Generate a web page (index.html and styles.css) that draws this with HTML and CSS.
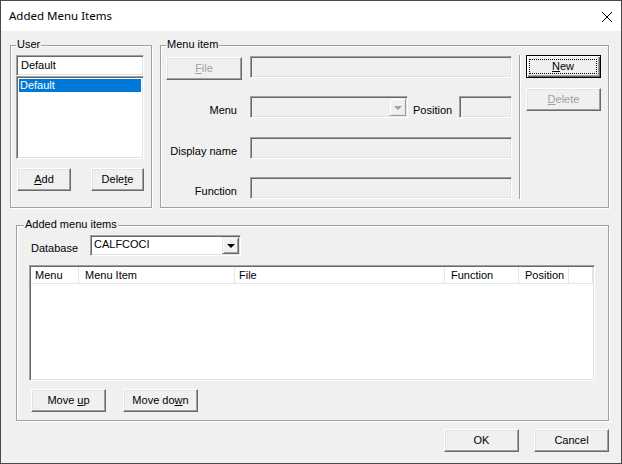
FILE: index.html
```html
<!DOCTYPE html>
<html>
<head>
<meta charset="utf-8">
<title>Added Menu Items</title>
<link rel="stylesheet" href="styles.css">
</head>
<body>
<div class="window">
  <div class="titlebar">
    <span class="title">Added Menu Items</span>
    <svg class="close" width="10" height="10" viewBox="0 0 10 10"><path d="M0 0L10 10M10 0L0 10" stroke="#000" stroke-width="1"/></svg>
  </div>
  <div class="content">
    <div class="top-row">
      <div class="group user-group">
        <span class="group-label">User</span>
        <div class="field user-field">Default</div>
        <div class="field listbox"><div class="list-item selected">Default</div></div>
        <div class="btn-row user-btns">
          <div class="btn btn-add"><span><u>A</u>dd</span></div>
          <div class="btn btn-udel"><span>Dele<u>t</u>e</span></div>
        </div>
      </div>
      <div class="group menu-group">
        <span class="group-label">Menu item</span>
        <div class="menu-form">
          <div class="form-row r1">
            <div class="btn disabled file-btn"><span><u>F</u>ile</span></div>
            <div class="field disabled wide"></div>
          </div>
          <div class="form-row r2">
            <span class="lbl">Menu</span>
            <div class="field disabled combo menu-combo"><span class="arrow off"><i class="tri"></i></span></div>
            <span class="lbl-inline">Position</span>
            <div class="field disabled pos"></div>
          </div>
          <div class="form-row r3">
            <span class="lbl">Display name</span>
            <div class="field disabled wide"></div>
          </div>
          <div class="form-row r4">
            <span class="lbl">Function</span>
            <div class="field disabled wide"></div>
          </div>
        </div>
        <div class="vsep"></div>
        <div class="side-btns">
          <div class="btn default"><span class="focus"><u>N</u>ew</span></div>
          <div class="btn disabled side-del"><span><u>D</u>elete</span></div>
        </div>
      </div>
    </div>
    <div class="group added-group">
      <span class="group-label">Added menu items</span>
      <div class="db-row">
        <span class="db-label">Database</span>
        <div class="field combo db-combo"><span class="combo-text">CALFCOCI</span><span class="arrow"><i class="tri"></i></span></div>
      </div>
      <div class="field listview">
        <div class="lv-header">
          <span class="col c-menu">Menu</span>
          <span class="col c-item">Menu Item</span>
          <span class="col c-file">File</span>
          <span class="col c-func">Function</span>
          <span class="col c-pos">Position</span>
        </div>
      </div>
      <div class="btn-row move-btns">
        <div class="btn move-up"><span>Move <u>u</u>p</span></div>
        <div class="btn move-down"><span>Move do<u>w</u>n</span></div>
      </div>
    </div>
    <div class="footer">
      <div class="btn ok"><span>OK</span></div>
      <div class="btn"><span>Cancel</span></div>
    </div>
  </div>
</div>
</body>
</html>
```
FILE: styles.css
```css
* { box-sizing: border-box; margin: 0; padding: 0; }
html, body { width: 622px; height: 464px; overflow: hidden; }
body {
  font-family: "Liberation Sans", Arial, sans-serif;
  font-size: 11px;
  color: #000;
  background: #f0f0f0;
}
.window {
  width: 622px;
  height: 464px;
  border: 1px solid #4a4a4a;
  display: flex;
  flex-direction: column;
  background: #f0f0f0;
}
.titlebar {
  height: 30px;
  flex: none;
  background: #fff;
  display: flex;
  align-items: center;
  justify-content: space-between;
  padding: 0 9px 0 8px;
}
.title {
  font-family: "Noto Sans", "Open Sans", sans-serif;
  font-size: 11.5px;
  line-height: 16px;
}
.close { display: block; margin-top: 1px; }

.content {
  flex: 1;
  padding: 14px 0 0 9px;
  display: flex;
  flex-direction: column;
}
.top-row { display: flex; align-items: flex-start; }

.group {
  position: relative;
  border: 1px solid #a0a0a0;
  box-shadow: inset 1px 1px #fff, 1px 1px #fff;
}
.group-label {
  position: absolute;
  top: -8px;
  left: 5px;
  padding: 0 1px;
  line-height: 13px;
  background: #f0f0f0;
}

/* sunken field */
.field {
  border: 1px solid;
  border-color: #a0a0a0 #fff #fff #a0a0a0;
  box-shadow: inset 1px 1px #696969, inset -1px -1px #e3e3e3;
  background: #fff;
}
.field.disabled { background: #f0f0f0; }

/* raised button */
.btn {
  height: 23px;
  display: flex;
  align-items: center;
  justify-content: center;
  background: #f0f0f0;
  border: 1px solid;
  border-color: #fff #696969 #696969 #fff;
  box-shadow: inset -1px -1px #a0a0a0, inset 1px 1px #e3e3e3;
  width: 75px;
  line-height: 13px;
}
.btn.disabled { color: #a0a0a0; }
.btn.default {
  border-color: #000;
  box-shadow: inset 1px 1px #fff, inset -1px -1px #696969, inset -2px -2px #a0a0a0;
  align-items: stretch;
}
.focus {
  flex: 1;
  margin: 3px 3px 3px 2px;
  border: 1px dotted #000;
  display: flex;
  align-items: center;
  justify-content: center;
}

/* User group */
.user-group {
  width: 142px;
  height: 163px;
  padding: 9px 0 0 5px;
}
.user-field {
  width: 128px;
  height: 21px;
  padding-left: 4px;
  line-height: 19px;
}
.listbox {
  width: 128px;
  height: 83px;
  padding: 2px;
}
.list-item {
  height: 13px;
  line-height: 13px;
  padding-left: 1px;
}
.list-item.selected { background: #0078d7; color: #fff; }
.btn-row { display: flex; }
.user-btns { margin-top: 9px; }
.btn-add { width: 54px; margin-left: 1px; }
.btn-udel { width: 53px; margin-left: 20px; }

/* Menu item group */
.menu-group {
  width: 449px;
  height: 163px;
  margin-left: 8px;
  padding: 10px 0 0 5px;
  display: flex;
  align-items: flex-start;
}
.menu-form { width: 346px; display: flex; flex-direction: column; }
.form-row { display: flex; align-items: flex-start; height: 22px; }
.r2 { margin-top: 18px; }
.r3 { margin-top: 19px; }
.r4 { margin-top: 18px; }
.file-btn { width: 76px; margin-top: 1px; }
.wide { width: 262px; height: 22px; margin-left: 8px; }
.lbl {
  width: 76px;
  text-align: right;
  padding-right: 5px;
  margin-top: 8px;
  line-height: 13px;
}
.combo { height: 22px; display: flex; justify-content: flex-end; padding: 1px; }
.menu-combo { width: 158px; margin-left: 8px; }
.lbl-inline { margin: 8px 0 0 5px; line-height: 13px; }
.pos { width: 53px; height: 22px; margin-left: auto; }

.arrow {
  width: 17px;
  height: 100%;
  display: flex;
  align-items: center;
  justify-content: center;
  background: #f0f0f0;
  border: 1px solid;
  border-color: #e3e3e3 #696969 #696969 #e3e3e3;
  box-shadow: inset 1px 1px #fff, inset -1px -1px #a0a0a0;
}
.arrow.off {
  border-color: #f0f0f0 #a0a0a0 #a0a0a0 #f0f0f0;
  box-shadow: inset 1px 1px #fff, inset -1px -1px #e3e3e3;
}
.tri {
  display: block;
  width: 0;
  height: 0;
  border-left: 4px solid transparent;
  border-right: 4px solid transparent;
  border-top: 4px solid #000;
  margin-top: 1px;
}
.arrow.off .tri { border-top-color: #a0a0a0; }

.vsep {
  width: 2px;
  height: 144px;
  margin: -1px 0 0 7px;
  border-left: 1px solid #a0a0a0;
  border-right: 1px solid #fff;
}
.side-btns { margin: -1px 0 0 5px; display: flex; flex-direction: column; }
.side-del { margin-top: 10px; }

/* Added menu items group */
.added-group {
  width: 593px;
  height: 196px;
  margin: 17px 0 0 6px;
  padding: 9px 0 0 12px;
}
.added-group .group-label { left: 7px; }
.db-row { display: flex; align-items: flex-start; height: 21px; }
.db-label { width: 61px; padding-left: 2px; margin-top: 7px; line-height: 13px; }
.db-combo {
  width: 151px;
  height: 21px;
  justify-content: space-between;
  padding: 1px;
}
.combo-text { padding: 1px 0 0 2px; line-height: 13px; }
.listview {
  width: 566px;
  height: 116px;
  margin-top: 9px;
  padding: 1px;
}
.lv-header {
  display: flex;
  height: 17px;
  width: 562px;
  background: #fff;
  border-bottom: 1px solid #e5e5e5;
  border-right: 1px solid #e5e5e5;
}
.col {
  line-height: 16px;
  border-right: 1px solid #e5e5e5;
  padding-left: 6px;
  white-space: nowrap;
}
.c-menu { width: 48px; padding-left: 4px; }
.c-item { width: 156px; }
.c-file { width: 210px; padding-left: 4px; }
.c-func { width: 74px; }
.c-pos { width: 50px; }

.move-btns { margin-top: 8px; }
.move-up { margin-left: 2px; }
.move-down { margin-left: 17px; }

.footer {
  display: flex;
  justify-content: flex-end;
  gap: 15px;
  margin: 8px 12px 0 0;
}
```
